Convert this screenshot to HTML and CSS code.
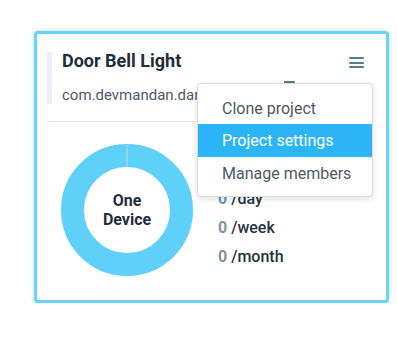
FILE: index.html
```html
<!DOCTYPE html>
<html>
<head>
<meta charset="utf-8">
<link rel="stylesheet" href="styles.css">
</head>
<body>
<div class="page">
  <div class="card">
    <div class="head">
      <div class="bar"></div>
      <div class="titles">
        <div class="title">Door Bell Light</div>
        <div class="sub">com.devmandan.darkbell</div>
      </div>
      <div class="tools">
        <div class="burger"><span></span><span></span><span></span></div>
        <div class="tab"></div>
      </div>
    </div>
    <div class="divider"></div>
    <div class="body">
      <div class="donut">
        <svg width="132" height="132" viewBox="0 0 132 132">
          <circle cx="66" cy="66" r="54.5" fill="none" stroke="#5fd0f9" stroke-width="23"/>
          <line x1="66" y1="1" x2="66" y2="23" stroke="#c9d3d9" stroke-width="1"/>
        </svg>
        <div class="donut-label">One<br>Device</div>
      </div>
      <div class="stats">
        <div class="stat"><b>0</b> /day</div>
        <div class="stat"><b>0</b> /week</div>
        <div class="stat"><b>0</b> /month</div>
      </div>
    </div>
    <div class="menu">
      <div class="item">Clone project</div>
      <div class="item active">Project settings</div>
      <div class="item">Manage members</div>
    </div>
  </div>
</div>
</body>
</html>
```
FILE: styles.css
```css
* { box-sizing: border-box; }
html, body { margin: 0; padding: 0; background: #fff; }
body { font-family: Roboto, "Liberation Sans", sans-serif; }
.page { padding: 31px 0 0 34px; }
.card {
  position: relative;
  width: 355px;
  height: 272px;
  border: 3px solid #68d2fa;
  border-radius: 4px;
  box-shadow: 0 0 4px rgba(104, 200, 245, 0.55);
  background: #fff;
  padding: 18px 10px 0 10px;
}
.head { display: flex; height: 52px; }
.bar { width: 5px; height: 52px; background: #e9eff5; flex: none; }
.titles { flex: 1; min-width: 0; padding-left: 10px; }
.title {
  font-size: 18px; font-weight: 700; color: #1f2d3b;
  line-height: 20px; margin-top: -1px; white-space: nowrap;
}
.sub {
  width: 135px;
  font-size: 15px; color: #4e5966; line-height: 20px; margin-top: 14px;
  white-space: nowrap; overflow: hidden;
}
.tools { width: 90px; position: relative; flex: none; }
.burger { position: absolute; right: 12px; top: 5px; width: 15px; display: flex; flex-direction: column; gap: 2.5px; }
.burger span { display: block; height: 2px; background: #5a7a8d; border-radius: 1px; }
.tab { position: absolute; left: -2px; top: 29px; width: 11px; height: 4px; background: #5a7a8d; border-radius: 1px; }
.divider { height: 1px; background: #e6e9ec; margin: 17px 2px 0 0; }
.body { display: flex; align-items: flex-start; padding: 22px 0 0 14px; }
.donut { position: relative; width: 132px; height: 132px; flex: none; }
.donut svg { display: block; }
.donut-label {
  position: absolute; inset: 0; display: flex; align-items: center; justify-content: center;
  text-align: center; font-weight: 700; font-size: 16px; line-height: 19px; color: #1f2d3b;
}
.stats { padding: 40px 0 0 25px; display: flex; flex-direction: column; }
.stat { font-size: 16px; line-height: 29px; color: #26323e; font-weight: 500; }
.stat b { color: #7b94a8; font-weight: 700; }
.menu {
  position: absolute; left: 160px; top: 49px; width: 176px;
  background: #fff; border: 1px solid #d9dde1; border-radius: 4px;
  box-shadow: 0 2px 6px rgba(0,0,0,0.12);
  padding: 7px 0 6px;
}
.item { height: 33px; line-height: 33px; padding-left: 24px; font-size: 16px; color: #4e5966; }
.item:first-child { line-height: 35px; }
.item.active { background: #2bb5f7; color: #fff; }
```
